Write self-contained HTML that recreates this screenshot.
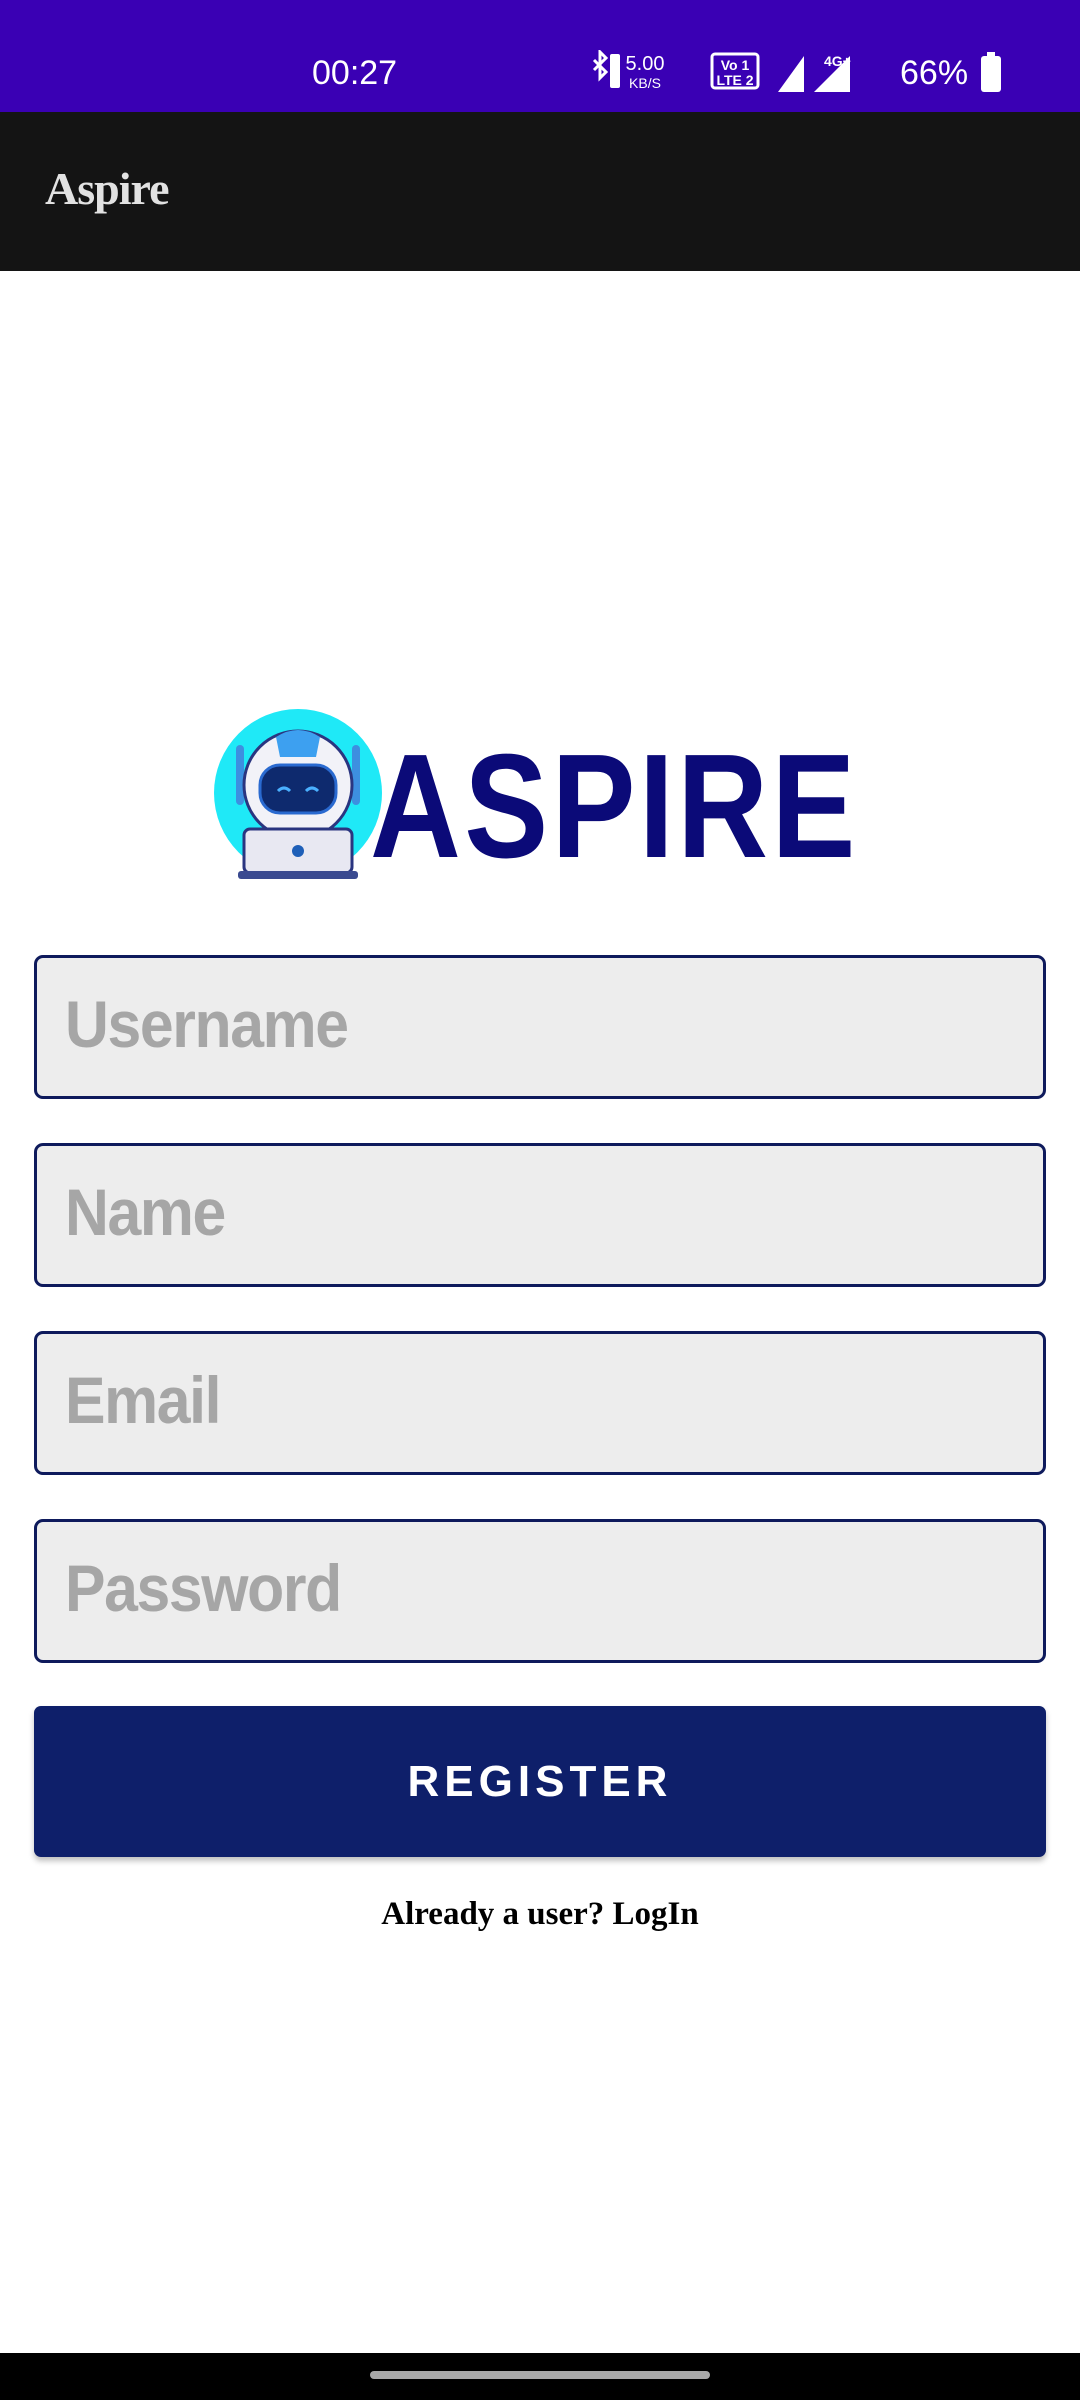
<!DOCTYPE html>
<html><head><meta charset="utf-8"><style>
*{margin:0;padding:0;box-sizing:border-box}
body{width:1080px;height:2400px;background:#fff;position:relative;overflow:hidden;font-family:"Liberation Sans",sans-serif}
.status{position:absolute;left:0;top:0;width:1080px;height:112px;background:#3a00b4;color:#fff}
.time{position:absolute;left:312px;top:56px;font-size:34px;line-height:1}
.tb{position:absolute;left:0;top:112px;width:1080px;height:159px;background:#141414}
.tb span{position:absolute;left:45px;top:50px;font-family:"Liberation Serif",serif;font-weight:bold;font-size:46px;color:#e2e2e2;letter-spacing:-1px}
.inp{position:absolute;left:34px;width:1012px;height:144px;background:#ededed;border:3px solid #0e1a5c;border-radius:9px}
.inp span{position:absolute;left:28px;top:28px;font-size:66px;font-weight:bold;color:#a6a6a6;letter-spacing:-1.5px;transform:scaleX(0.92);transform-origin:left}
.btn{position:absolute;left:34px;top:1706px;width:1012px;height:151px;background:#0e1f6a;border-radius:7px;box-shadow:0 4px 6px rgba(0,0,0,.25);color:#fff;font-weight:bold;font-size:44px;letter-spacing:5px;text-align:center;line-height:151px}
.link{position:absolute;left:0;width:1080px;top:1896px;text-align:center;font-family:"Liberation Serif",serif;font-weight:bold;font-size:33px;color:#000}
.nav{position:absolute;left:0;top:2353px;width:1080px;height:47px;background:#000}
.pill{position:absolute;left:370px;top:2371px;width:340px;height:8px;border-radius:4px;background:#a8a8a8}
.logo{position:absolute;left:370px;top:733px;font-weight:bold;font-size:148px;color:#0b0a78;transform:scaleX(0.85);transform-origin:left;letter-spacing:4px;line-height:1}
</style></head><body>
<div class="status"><div class="time">00:27</div>
<svg style="position:absolute;left:590px;top:50px" width="420" height="46" viewBox="0 0 420 46">
<g fill="#fff">
<path d="M4 10 L16 22 L10 28 L10 2 L16 8 L4 20" stroke="#fff" stroke-width="3" fill="none"/>
<rect x="20" y="4" width="10" height="34" rx="2"/>
<text x="55" y="20" font-size="20" font-family="Liberation Sans" text-anchor="middle">5.00</text>
<text x="55" y="38" font-size="14" font-family="Liberation Sans" text-anchor="middle">KB/S</text>
<rect x="122" y="4" width="46" height="34" rx="3" fill="none" stroke="#fff" stroke-width="3"/>
<text x="145" y="20" font-size="14" font-family="Liberation Sans" font-weight="bold" text-anchor="middle">Vo 1</text>
<text x="145" y="35" font-size="14" font-family="Liberation Sans" font-weight="bold" text-anchor="middle">LTE 2</text>
<path d="M188 42 L214 6 L214 42Z"/>
<path d="M224 42 L260 6 L260 42Z"/>
<text x="234" y="16" font-size="14" font-family="Liberation Sans" font-weight="bold">4G+</text>
<text x="310" y="34" font-size="34" font-family="Liberation Sans">66%</text>
<rect x="391" y="6" width="20" height="36" rx="3"/><rect x="397" y="2" width="8" height="6"/>
</g></svg>
</div>
<div class="tb"><span>Aspire</span></div>
<svg style="position:absolute;left:208px;top:705px" width="180" height="180" viewBox="0 0 180 180">
<circle cx="90" cy="88" r="84" fill="#1fe9f7"/>
<rect x="28" y="40" width="8" height="60" rx="4" fill="#3d8fe0"/>
<rect x="144" y="40" width="8" height="60" rx="4" fill="#3d8fe0"/>
<circle cx="90" cy="80" r="54" fill="#f2f2f8" stroke="#2a3580" stroke-width="3"/>
<path d="M68 32 Q90 18 112 32 L108 52 L72 52Z" fill="#3da0f0"/>
<rect x="52" y="60" width="76" height="48" rx="20" fill="#0e2a6e" stroke="#2a6ad0" stroke-width="3"/>
<path d="M70 86 q6 -6 12 0 M98 86 q6 -6 12 0" stroke="#4ab0ff" stroke-width="3" fill="none"/>
<rect x="36" y="124" width="108" height="44" rx="6" fill="#e8e8f2" stroke="#2a3580" stroke-width="3"/>
<circle cx="90" cy="146" r="6" fill="#1e5fb8"/>
<rect x="30" y="166" width="120" height="8" rx="3" fill="#3a4a90"/>
</svg>
<div class="logo">ASPIRE</div>
<div class="inp" style="top:955px"><span>Username</span></div>
<div class="inp" style="top:1143px"><span>Name</span></div>
<div class="inp" style="top:1331px"><span>Email</span></div>
<div class="inp" style="top:1519px"><span>Password</span></div>
<div class="btn">REGISTER</div>
<div class="link">Already a user? LogIn</div>
<div class="nav"></div><div class="pill"></div>
</body></html>
